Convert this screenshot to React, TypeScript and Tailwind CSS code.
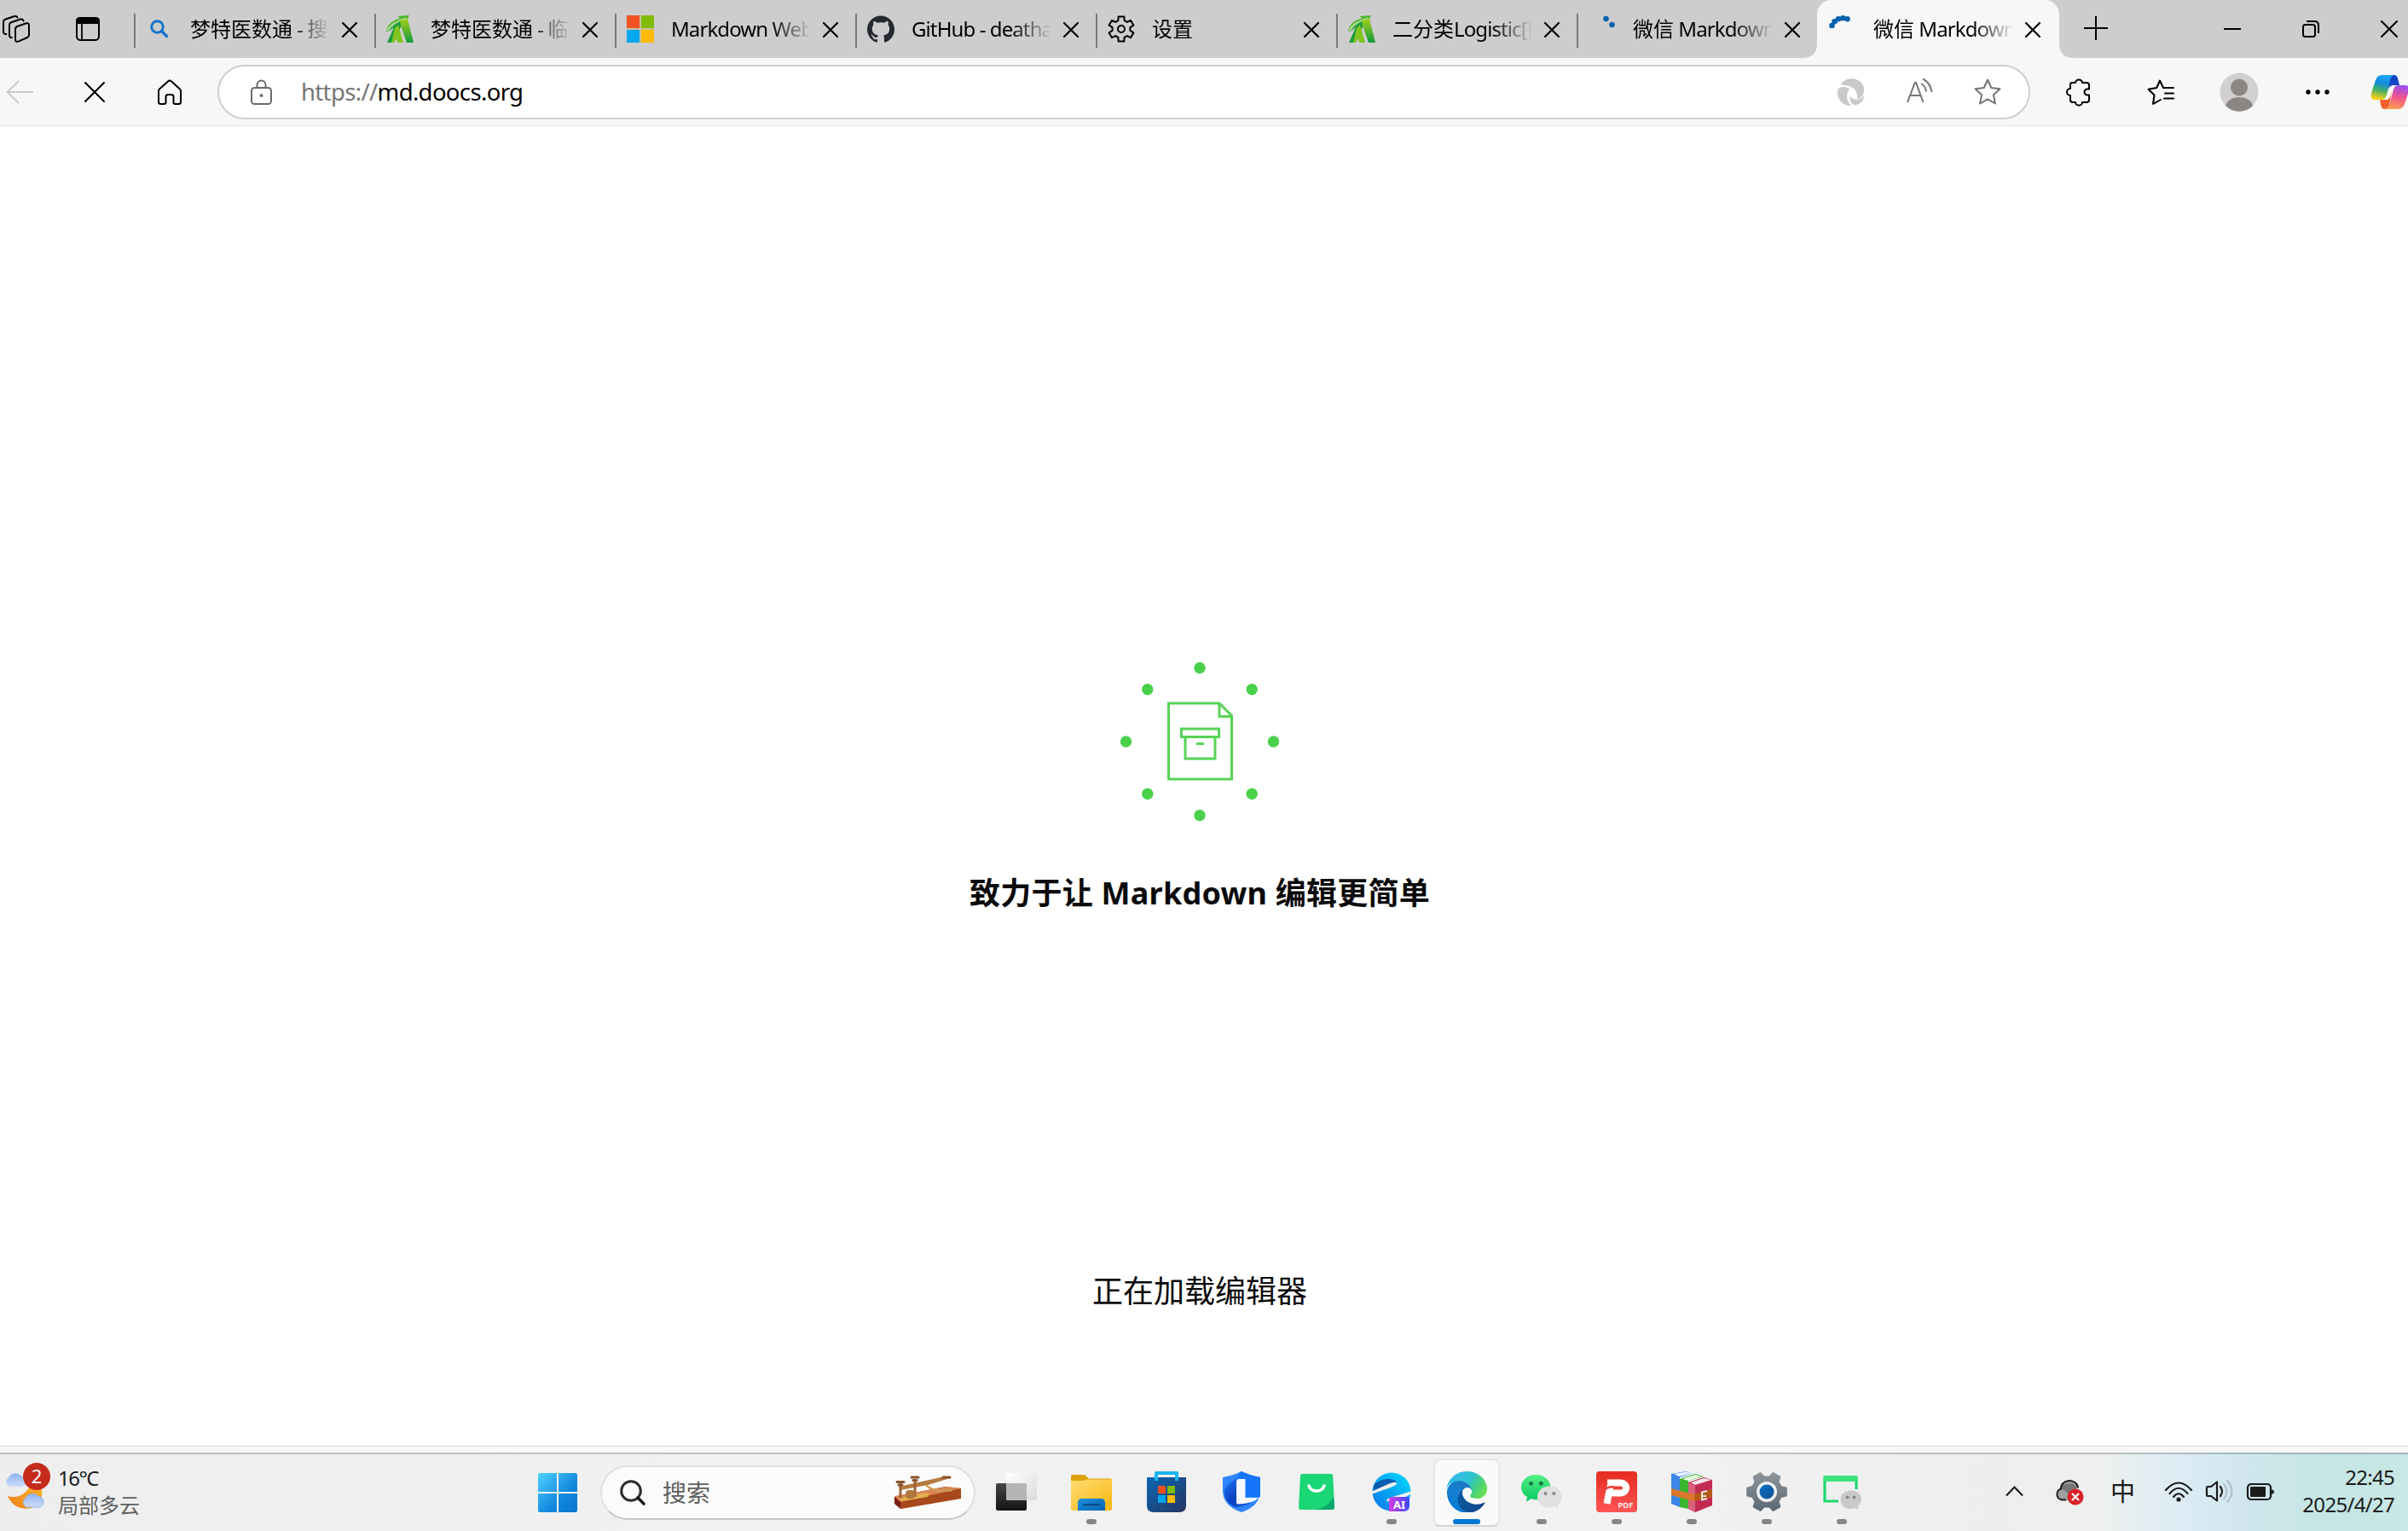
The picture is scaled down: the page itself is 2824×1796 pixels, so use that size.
import React from "react";
import { SiGithub } from "react-icons/si";

type IconProps = { w: number; h: number; className?: string; children: React.ReactNode };

/** Inline drawing whose user units equal CSS pixels. */
function Draw({ w, h, className = "", children }: IconProps) {
  return (
    <svg width={w} height={h} viewBox={`0 0 ${w} ${h}`} fill="none" className={`block shrink-0 overflow-visible ${className}`}>
      {children}
    </svg>
  );
}

function gearPoints(c: number, outer: number, inner: number, teeth: number, offset: number, top: number, base: number) {
  const pts: string[] = [];
  for (let i = 0; i < teeth; i++) {
    const a = offset + (i * 360) / teeth;
    const steps: [number, number][] = [
      [-base, inner],
      [-top, outer],
      [top, outer],
      [base, inner],
    ];
    for (const [d, r] of steps) {
      const t = ((a + d) * Math.PI) / 180;
      pts.push(`${(c + r * Math.cos(t)).toFixed(2)},${(c + r * Math.sin(t)).toFixed(2)}`);
    }
  }
  return pts.join(" ");
}

/* ---------- tab strip ---------- */

const Cross = ({ size, stroke = 2.2 }: { size: number; stroke?: number }) => (
  <Draw w={size} h={size}>
    <path d={`M1 1L${size - 1} ${size - 1}M${size - 1} 1L1 ${size - 1}`} stroke="#000" strokeWidth={stroke} strokeLinecap="round" />
  </Draw>
);

const SearchFav = () => (
  <Draw w={32} h={32}>
    <circle cx="13.5" cy="13.5" r="6.8" stroke="#1373cc" strokeWidth="3" />
    <path d="M18.5 18.5L24.5 24.5" stroke="#1373cc" strokeWidth="3.2" strokeLinecap="round" />
  </Draw>
);

const LeafFav = ({ id }: { id: string }) => (
  <Draw w={32} h={32}>
    <defs>
      <linearGradient id={id} x1="0" y1="0" x2="0" y2="1">
        <stop offset="0" stopColor="#a3cf1c" />
        <stop offset="1" stopColor="#119a3b" />
      </linearGradient>
    </defs>
    <path d="M0 19C1 11 8 5 16 4L14 1L27 0L25 4C15 6 6 11 2 19Z" fill="#4db52c" />
    <path d="M3 19C7 12 13 8 19 6L17 14L7 32H1L9 14Z" fill="#1a9c3a" />
    <path d="M16 6L25 4L32 32H24L17 12Z" fill={`url(#${id})`} />
    <path d="M10 15L14 11L20 32H13L12 27L9 32H6Z" fill="#83c41f" />
    <path d="M1 18C5 10 12 6 24 3" stroke="#cde8b0" strokeWidth="1.2" />
  </Draw>
);

const MicrosoftFav = () => (
  <Draw w={32} h={32}>
    <rect width="15" height="15" fill="#f35325" />
    <rect x="17" width="15" height="15" fill="#81bc06" />
    <rect y="17" width="15" height="15" fill="#05a6f0" />
    <rect x="17" y="17" width="15" height="15" fill="#ffba08" />
    <path d="M16 0V32M0 16H32" stroke="#c9c39a" strokeWidth="2" />
  </Draw>
);

const GearFav = () => (
  <Draw w={32} h={32}>
    <polygon points={gearPoints(16, 15, 10.6, 6, 30 + 60, 13, 20)} stroke="#000" strokeWidth="2" strokeLinejoin="round" />
    <circle cx="16" cy="16" r="4" stroke="#000" strokeWidth="2" />
  </Draw>
);

const Dots = ({ pts }: { pts: [number, number][] }) => (
  <Draw w={32} h={32}>
    {pts.map(([x, y]) => (
      <circle key={x} cx={x} cy={y} r="3.3" fill="#0961ac" />
    ))}
  </Draw>
);

type Tab = { cjk?: string; latin?: string; tail?: string; icon: React.ReactNode; active?: boolean };

const tabs: Tab[] = [
  { cjk: "梦特医数通", latin: " - ", tail: "搜索", icon: <SearchFav /> },
  { cjk: "梦特医数通", latin: " - ", tail: "临床", icon: <LeafFav id="leafA" /> },
  { latin: "Markdown Web", icon: <MicrosoftFav /> },
  { latin: "GitHub - deathau", icon: <SiGithub className="size-8 text-[#24292f]" /> },
  { cjk: "设置", icon: <GearFav /> },
  { cjk: "二分类", latin: "Logistic", tail: "回归", icon: <LeafFav id="leafB" /> },
  { cjk: "微信", latin: " Markdown", icon: <Dots pts={[[20.5, 4], [27.5, 11]]} /> },
  { cjk: "微信", latin: " Markdown", icon: <Dots pts={[[3.5, 12], [6.5, 7.3], [11, 4.3], [16.3, 3.2], [21.5, 4.3]]} />, active: true },
];

function TabStrip() {
  return (
    <header className="flex h-[68px] items-center bg-[#cdcdcd]">
      <div className="flex w-[157px] shrink-0 items-center pl-[3px]">
        <Draw w={32} h={32}>
          <g stroke="#000" strokeWidth="2" strokeLinejoin="round" strokeLinecap="round">
            <path d="M17 13L28 9.3Q31 8.6 31 11.5V23Q31 25 29 26L18.5 30.6Q15 31.8 15 28.5V16Q15 14 17 13Z" />
            <path d="M11 26Q8 26.5 8 23V11Q8 9 10 8.200L21 4.500Q24 4 24.500 6.500" />
            <path d="M4.500 22Q1 22.500 1 19V7.500Q1 5.500 3 4.700L14 1Q17 0.600 17.500 2.500" />
          </g>
        </Draw>
        <Draw w={28} h={28} className="ml-[54px]">
          <rect x="1" y="1" width="26" height="26" rx="4.500" stroke="#000" strokeWidth="2" />
          <path d="M0 8V5Q0 0 5 0H23Q28 0 28 5V8Z" fill="#000" />
          <path d="M7 8V27" stroke="#000" strokeWidth="1.800" />
        </Draw>
      </div>
      {tabs.map((t, i) => (
        <div
          key={i}
          className={
            t.active
              ? "relative flex h-full w-[284px] shrink-0 items-center rounded-t-[17px] bg-[#f7f7f7] pl-[14px]"
              : "flex h-full w-[282px] shrink-0 items-center"
          }
        >
          {t.active ? (
            <>
              <Draw w={17} h={17} className="absolute bottom-0 -left-[17px]">
                <path d="M17 0V17H0Q17 17 17 0Z" fill="#f7f7f7" />
              </Draw>
              <Draw w={17} h={17} className="absolute bottom-0 -right-[17px]">
                <path d="M0 0V17H17Q0 17 0 0Z" fill="#f7f7f7" />
              </Draw>
            </>
          ) : (
            <div className="mt-1 mr-3 h-10 w-[2px] bg-[#7a7a7a]" />
          )}
          {t.icon}
          <div className="ml-5 w-[162px] overflow-hidden text-[24px] leading-[34px] whitespace-pre text-black [mask-image:linear-gradient(to_right,#000_72%,transparent_102%)]">
            {t.cjk}
            <span className="tracking-[-0.9px]">{t.latin}</span>
            {t.latin && t.tail === "回归" ? "[" : ""}
            {t.tail}
          </div>
          <div className="mt-[2px] ml-4">
            <Cross size={18} />
          </div>
        </div>
      ))}
      <Draw w={28} h={28} className="ml-[29px] -mt-[2px]">
        <path d="M14 0V28M0 14H28" stroke="#000" strokeWidth="2" />
      </Draw>
      <div className="ml-[136px] h-[2px] w-5 bg-black" />
      <Draw w={20} h={20} className="ml-[72px]">
        <rect x="1" y="5" width="14" height="14" rx="2.500" stroke="#000" strokeWidth="2" />
        <path d="M5 1H14.500Q19 1 19 5.500V15" stroke="#000" strokeWidth="2" />
      </Draw>
      <div className="ml-[72px]">
        <Cross size={20} stroke={2} />
      </div>
    </header>
  );
}

/* ---------- toolbar ---------- */

const StarPath = "M16 1.500L20.300 11L30.500 12.200L22.900 19.200L25 29.500L16 24.400L7 29.500L9.100 19.200L1.500 12.200L11.700 11Z";

function Toolbar() {
  const cell = "flex w-[88px] shrink-0 items-center justify-center";
  return (
    <div className="flex h-20 items-center overflow-hidden border-b border-[#e5e5e5] bg-[#f7f7f7]">
      <div className="-ml-[21px] flex">
        <div className={cell}>
          <Draw w={32} h={28}>
            <path d="M32 14H1.500M15 1L1.500 14L15 27" stroke="#c9c9c9" strokeWidth="2" />
          </Draw>
        </div>
        <div className={cell}>
          <Cross size={24} stroke={2} />
        </div>
        <div className={cell}>
          <Draw w={28} h={30}>
            <path
              d="M14 1.500Q15 1.500 16 2.500L26 11.500Q27 12.500 27 14V26.500Q27 29 24.500 29H20.500Q18.500 29 18.500 27V20.500Q18.500 18 16 18H12Q9.500 18 9.500 20.500V27Q9.500 29 7.500 29H3.500Q1 29 1 26.500V14Q1 12.500 2 11.500L12 2.500Q13 1.500 14 1.500Z"
              stroke="#000"
              strokeWidth="2"
            />
          </Draw>
        </div>
      </div>

      <div className="ml-3 flex h-16 w-[2126px] shrink-0 items-center rounded-full border-2 border-[#cecece] bg-white pr-2 pl-[37px]">
        <Draw w={25} h={30}>
          <rect x="1" y="10" width="23" height="19" rx="3.500" stroke="#6b6b6b" strokeWidth="2" />
          <path d="M7.500 10V6.500A5 5 0 0 1 17.500 6.500V10" stroke="#6b6b6b" strokeWidth="2" />
          <circle cx="12.500" cy="19" r="2" fill="#6b6b6b" />
        </Draw>
        <div className="ml-[34px] flex-1 text-[27.5px] leading-9 tracking-[-0.65px] text-black">
          <span className="text-[#757575]">https://</span>md.doocs.org
        </div>
        <div className="flex w-20 justify-center">
          <Draw w={32} h={32}>
            <g fill="#c9c9c9">
              <path d="M3.500 7.500C9 -2 25 -3 30.500 9C33 19 27 24 23 24.500C25 17 20 7.500 3.500 7.500Z" />
              <path d="M0.500 13C-2 24 6 32 16 32C11 27 9 20 14 12.500C9 8.500 4 9 0.500 13Z" />
              <path d="M14.500 21C14 26 16 30 20 31.500C27 30 31 26 31.500 20C27 26 20 26.500 14.500 21Z" />
            </g>
          </Draw>
        </div>
        <div className="flex w-20 justify-center">
          <Draw w={30} h={32}>
            <path d="M1 28L9.700 5H11L19.500 28M4 20H16.800" stroke="#757575" strokeWidth="2" />
            <path d="M17 6Q22 9 23 15.500M19 0.500Q28 5 29.500 16" stroke="#757575" strokeWidth="2" />
          </Draw>
        </div>
        <div className="flex w-20 justify-center">
          <Draw w={32} h={32}>
            <path d={StarPath} stroke="#757575" strokeWidth="2" strokeLinejoin="round" />
          </Draw>
        </div>
      </div>

      <Draw w={28} h={32} className="ml-[42px]">
        <path
          d="M7 5H11A4 3.600 0 0 1 19 5H24Q27 5 27 8V12.500H25A3.500 3.500 0 0 0 25 19.500H27V25Q27 28 24 28H19A4 3.600 0 0 1 11 28H8Q5 28 5 25V20A4 4 0 0 1 5 12V7Q5 5 7 5Z"
          stroke="#000"
          strokeWidth="2"
          strokeLinejoin="round"
        />
      </Draw>
      <div className="ml-[34px] h-8 w-[2px] bg-[#cecece]" />
      <Draw w={32} h={30} className="ml-[33px]">
        <path d="M19 10L15 1.500L11.200 10L1.500 11.700L8.500 18.500L7 29L16 24" stroke="#000" strokeWidth="2" strokeLinejoin="round" strokeLinecap="round" />
        <path d="M19 10H31M21 16.500H31M20 22.500H31" stroke="#000" strokeWidth="2" strokeLinecap="round" />
      </Draw>
      <Draw w={46} h={46} className="ml-[53px]">
        <circle cx="23" cy="23" r="22.500" fill="#d2d0ce" />
        <circle cx="23" cy="17.500" r="10" fill="#8a8785" />
        <path d="M7 39C9 32 16 29 23 29C30 29 37 32 39 39A22.500 22.500 0 0 1 7 39Z" fill="#8a8785" />
      </Draw>
      <Draw w={28} h={6} className="ml-[55px]">
        <circle cx="3" cy="3" r="2.700" fill="#000" />
        <circle cx="14" cy="3" r="2.700" fill="#000" />
        <circle cx="25" cy="3" r="2.700" fill="#000" />
      </Draw>
      <Draw w={46} h={40} className="ml-[48px]">
        <defs>
          <linearGradient id="cpL" x1="0.500" y1="0" x2="0.300" y2="1">
            <stop offset="0" stopColor="#1fa4f0" />
            <stop offset="0.300" stopColor="#0f8be0" />
            <stop offset="0.600" stopColor="#3fae6a" />
            <stop offset="0.950" stopColor="#f2cf1a" />
          </linearGradient>
          <linearGradient id="cpR" x1="0.600" y1="0" x2="0.400" y2="1">
            <stop offset="0" stopColor="#9a4ff0" />
            <stop offset="0.500" stopColor="#f2558a" />
            <stop offset="1" stopColor="#ff9d4f" />
          </linearGradient>
        </defs>
        <path d="M22 0H28Q31 0 32 4L34 12H28Q22 12 21 17Z" fill="#1245c9" />
        <path d="M11 29H20L26 14L21 40H17Q13 40 12 35Z" fill="#f4602f" />
        <path d="M13 0H28Q24 1 23 6L19 24Q17 29 12 29H6Q-1 29 1 21L6 6Q8 0 13 0Z" fill="url(#cpL)" />
        <path d="M27 12H40Q47 12 45 19L40 34Q38 40 32 40H16Q21 39 22 35L27 17Q28 12 34 12Z" fill="url(#cpR)" />
        <path d="M28 12Q23 12 22 17L18 29Q22 29 23.500 24L27 13Z" fill="#fff" />
      </Draw>
    </div>
  );
}

/* ---------- page ---------- */

function Page() {
  const g = "#4ad04a";
  return (
    <main className="flex h-[1548px] flex-col items-center bg-white pr-[10px]">
      <Draw w={188} h={188} className="mt-[628px]">
        <g fill={g}>
          <circle cx="94" cy="7.500" r="6.700" />
          <circle cx="94" cy="180.500" r="6.700" />
          <circle cx="7.500" cy="94" r="6.700" />
          <circle cx="180.500" cy="94" r="6.700" />
          <circle cx="32.800" cy="32.800" r="6.700" />
          <circle cx="155.200" cy="32.800" r="6.700" />
          <circle cx="32.800" cy="155.200" r="6.700" />
          <circle cx="155.200" cy="155.200" r="6.700" />
        </g>
        <g stroke={g} strokeWidth="3" opacity="0.920">
          <path d="M57.500 49H117L131.500 63.500V138H57.500ZM117 49V64.500H131.500" />
          <rect x="72.500" y="79" width="44" height="9.500" />
          <path d="M77 88.500V114H112V88.500M90 96.500H99" />
        </g>
      </Draw>
      <h1 className="mt-[56px] text-[36px] leading-[56px] font-bold tracking-[0.25px] whitespace-nowrap text-[#0a0a0a]">
        致力于让 Markdown 编辑更简单
      </h1>
      <p className="mt-[412px] text-[36px] leading-[54px] whitespace-nowrap text-[#0a0a0a]">正在加载编辑器</p>
    </main>
  );
}

/* ---------- taskbar ---------- */

const CloudPath = "M6 18A6 6 0 0 1 5 7.500A9 9 0 0 1 20 5.500A6.500 6.500 0 0 1 22 18Z";

const Weather = () => (
  <Draw w={55} h={56}>
    <defs>
      <linearGradient id="cl" x1="0" y1="0" x2="0" y2="1">
        <stop offset="0" stopColor="#8eb2f4" />
        <stop offset="1" stopColor="#cfdef8" />
      </linearGradient>
      <linearGradient id="mn" x1="0" y1="1" x2="1" y2="0">
        <stop offset="0" stopColor="#ee7f1d" />
        <stop offset="1" stopColor="#fbb829" />
      </linearGradient>
    </defs>
    <path d={CloudPath} fill="url(#cl)" transform="translate(0 10)" />
    <path d="M4 39Q22 44 32 24L42 26Q46 33 43 42L33 53Q12 57 4 39Z" fill="url(#mn)" />
    <path d={CloudPath} fill="url(#cl)" stroke="#8eaef0" strokeWidth="0.800" transform="translate(20 34)" />
    <circle cx="38" cy="16" r="16" fill="#c42b1c" />
    <text x="38" y="24" textAnchor="middle" fontSize="22" fill="#fff">
      2
    </text>
  </Draw>
);

const WindowsLogo = () => (
  <Draw w={46} h={46}>
    <defs>
      <linearGradient id="win" x1="0" y1="0" x2="46" y2="46" gradientUnits="userSpaceOnUse">
        <stop offset="0" stopColor="#4fd3ff" />
        <stop offset="0.600" stopColor="#1389de" />
        <stop offset="1" stopColor="#0874cf" />
      </linearGradient>
    </defs>
    <path d="M2 0H22V22H0V2Q0 0 2 0ZM24 0H44Q46 0 46 2V22H24ZM0 24H22V46H2Q0 46 0 44ZM24 24H46V44Q46 46 44 46H24Z" fill="url(#win)" />
  </Draw>
);

const MorseKey = () => (
  <Draw w={80} h={40}>
    <path d="M1 25L60 13L79 15V27L9 39L1 33Z" fill="#a6481c" />
    <path d="M1 24L62 13L79 15L8 31Z" fill="#d98554" />
    <path d="M1 25L8 31V39L1 33Z" fill="#7a1f12" />
    <path d="M6 28L18 23L42 20L40 25L10 30Z" fill="#e3b04b" />
    <path d="M6 13L24 9L60 1L66 3L40 11L8 17Z" fill="#b5793f" />
    <path d="M8 8V26M25 4V25" stroke="#9b6236" strokeWidth="3" />
    <rect x="14" y="17" width="11" height="10" rx="4" fill="#b07a3f" />
    <path d="M38 11Q46 20 69 17" stroke="#cf9a52" strokeWidth="2.500" />
    <path d="M4 7.500H12M6 11H10M21 2H29M23 5.500H27M58 2H66" stroke="#8a5330" strokeWidth="3" strokeLinecap="round" />
  </Draw>
);

const TaskView = () => (
  <Draw w={48} h={48}>
    <defs>
      <linearGradient id="tvA" x1="0" y1="0" x2="0" y2="1">
        <stop offset="0" stopColor="#454545" />
        <stop offset="1" stopColor="#141414" />
      </linearGradient>
      <linearGradient id="tvB" x1="0" y1="0" x2="1" y2="1">
        <stop offset="0" stopColor="#fff" />
        <stop offset="1" stopColor="#dadada" />
      </linearGradient>
    </defs>
    <rect x="0" y="14" width="36" height="32" rx="2" fill="url(#tvA)" />
    <rect x="12" y="2" width="36" height="32" rx="2" fill="url(#tvB)" />
    <path d="M12 14H34Q36 14 36 16V34H14Q12 34 12 32Z" fill="#b5b5b5" />
  </Draw>
);

const Folder = () => (
  <Draw w={48} h={48}>
    <defs>
      <linearGradient id="fo" x1="0" y1="0" x2="1" y2="1">
        <stop offset="0" stopColor="#ffdd72" />
        <stop offset="1" stopColor="#f9b60f" />
      </linearGradient>
      <linearGradient id="fb" x1="0" y1="0" x2="1" y2="1">
        <stop offset="0" stopColor="#1791df" />
        <stop offset="1" stopColor="#0562ae" />
      </linearGradient>
    </defs>
    <path d="M0 6Q0 4 2 4H14Q17 4 18.500 6L20.500 8.500H46Q48 8.500 48 10V20H0Z" fill="#dda008" />
    <path d="M0 11H13Q16 11 18 9.500H48V44Q48 46 46 46H2Q0 46 0 44Z" fill="url(#fo)" />
    <path d="M8 46V37Q8 32 13 32H35Q40 32 40 37V46Z" fill="url(#fb)" />
    <path d="M14 39H34" stroke="#0a4a87" strokeWidth="2" />
  </Draw>
);

const Store = () => (
  <Draw w={48} h={48}>
    <defs>
      <linearGradient id="st" x1="0" y1="0" x2="1" y2="1">
        <stop offset="0" stopColor="#0b67b5" />
        <stop offset="1" stopColor="#263560" />
      </linearGradient>
    </defs>
    <path d="M1 7H47V40Q47 48 39 48H9Q1 48 1 40Z" fill="url(#st)" />
    <path d="M12 11V2H36V11" stroke="#19b4ee" strokeWidth="4" strokeLinejoin="round" />
    <path d="M14 17H23V26H14Z" fill="#f25022" />
    <path d="M25 17H34V26H25Z" fill="#7fba00" />
    <path d="M14 28H23V37H14Z" fill="#00a4ef" />
    <path d="M25 28H34V37H25Z" fill="#ffb900" />
  </Draw>
);

const Shield = () => (
  <Draw w={48} h={48}>
    <defs>
      <linearGradient id="sh" x1="0" y1="0" x2="1" y2="1">
        <stop offset="0" stopColor="#1b78f5" />
        <stop offset="0.500" stopColor="#0b3fc0" />
        <stop offset="1" stopColor="#1a6ff2" />
      </linearGradient>
    </defs>
    <path d="M24 0Q34 5 46 7V24Q45 41 24 48Q3 41 2 24V7Q14 5 24 0Z" fill="#2f86fa" />
    <path d="M24 0Q34 5 46 7V30H28V9H17Z" fill="#1574fb" />
    <path d="M19 9H18Q3 16 4 26Q5 36 16 42Q34 41 43 31L19 36Z" fill="url(#sh)" />
    <path d="M18 12Q18 9 21 9H28.500V31H44Q38 38 20 38.500Q18 38.500 18 36Z" fill="#f4f8ff" />
  </Draw>
);

const GreenBag = () => (
  <Draw w={48} h={48}>
    <path d="M7 3H41Q43 3 43.200 5L45 42Q45 45 42 45H6Q3 45 3 42L5 5Q5 3 7 3Z" fill="#1bd675" />
    <path d="M44 29L45 42Q45 45 42 45H22Q38 43 44 29Z" fill="#06a96b" />
    <path d="M15 17A9.500 9 0 0 0 33 17" stroke="#fff" strokeWidth="3.600" strokeLinecap="round" />
  </Draw>
);

const AiBrowser = () => (
  <Draw w={48} h={48}>
    <defs>
      <linearGradient id="ab" x1="0" y1="1" x2="1" y2="0">
        <stop offset="0" stopColor="#0a74e8" />
        <stop offset="1" stopColor="#04dcff" />
      </linearGradient>
      <linearGradient id="ai" x1="0" y1="0" x2="1" y2="0">
        <stop offset="0" stopColor="#d83be0" />
        <stop offset="1" stopColor="#3a4dff" />
      </linearGradient>
    </defs>
    <circle cx="24" cy="24" r="22.500" fill="url(#ab)" />
    <path d="M3 16Q12 8 22 9Q30 10 30 14Q20 16 14 20L3 23Z" fill="#075cae" />
    <path d="M0 24L20 15Q30 11 30 14Q30 17 14 22L0 27Z" fill="#f0f0f0" />
    <path d="M48 23L22 31Q14 35 22 35.500Q32 35 48 26Z" fill="#f0f0f0" />
    <path d="M21 34Q21 30 25 30H45V40Q45 47 38 47H21Z" fill="url(#ai)" />
    <text x="33" y="43.500" textAnchor="middle" fontSize="13" fontWeight="700" fill="#fff">
      AI
    </text>
  </Draw>
);

const Edge = () => (
  <svg width="48" height="48" viewBox="0 0 256 256" className="block">
    <defs>
      <linearGradient id="eA" x1="0.250" y1="0" x2="1" y2="0.300">
        <stop offset="0" stopColor="#0c59a4" />
        <stop offset="1" stopColor="#114a8b" />
      </linearGradient>
      <linearGradient id="eB" x1="0.800" y1="0.200" x2="0.200" y2="1">
        <stop offset="0" stopColor="#1b78c6" />
        <stop offset="0.500" stopColor="#1480d2" />
        <stop offset="1" stopColor="#0078d4" />
      </linearGradient>
      <linearGradient id="eC" x1="0" y1="0.300" x2="1" y2="0.700">
        <stop offset="0" stopColor="#35b8f1" />
        <stop offset="0.500" stopColor="#2cc3d0" />
        <stop offset="0.750" stopColor="#46d17c" />
        <stop offset="1" stopColor="#6be24c" />
      </linearGradient>
    </defs>
    <path
      fill="url(#eA)"
      d="M235.700 195.500a93.700 93.700 0 0 1-10.600 4.700 101.900 101.900 0 0 1-35.900 6.400c-47.300 0-88.500-32.500-88.500-74.300a31.500 31.500 0 0 1 16.400-27.300c-42.800 1.800-53.800 46.400-53.800 72.500 0 74 68.100 81.400 82.800 81.400 7.900 0 19.800-2.300 27-4.600l1.300-.4a128.300 128.300 0 0 0 66.600-52.800 4 4 0 0 0-5.300-5.600Z"
    />
    <path
      fill="url(#eB)"
      d="M110.300 246.300A79.200 79.200 0 0 1 87.600 225a80.700 80.700 0 0 1 29.500-120c3.200-1.500 8.500-4.100 15.600-4a32.400 32.400 0 0 1 25.700 13 31.900 31.900 0 0 1 6.300 18.700c0-.2 24.500-79.600-80-79.600-43.900 0-80 41.700-80 78.200a130.200 130.200 0 0 0 12.100 56 128 128 0 0 0 156.400 67 75.500 75.500 0 0 1-62.800-8Z"
    />
    <path
      fill="url(#eC)"
      d="M152.300 149c-.8 1-3.300 2.500-3.300 5.700 0 2.600 1.700 5.100 4.700 7.200 14.400 10 41.500 8.600 41.600 8.600a59.600 59.600 0 0 0 30.300-8.300 61.400 61.400 0 0 0 30.400-52.900c.3-22.400-8-37.300-11.300-43.900C223.500 23.900 177.700 0 128 0A128 128 0 0 0 0 126.200c.5-36.500 36.800-66 80-66 3.500 0 23.500.3 42 10 16.400 8.600 25 18.900 30.900 29.200 6.200 10.700 7.300 24.100 7.300 29.500 0 5.300-2.700 13.300-7.900 20.100Z"
    />
  </svg>
);

const WeChat = () => (
  <Draw w={48} h={48}>
    <defs>
      <linearGradient id="wc" x1="0" y1="0" x2="0" y2="1">
        <stop offset="0" stopColor="#55f082" />
        <stop offset="1" stopColor="#07c862" />
      </linearGradient>
    </defs>
    <path d="M17 4C27 4 34 10 34.500 19L22 33Q16 34 12 32L6 35.500L7 30Q0 26 0 19C0 10 8 4 17 4Z" fill="url(#wc)" />
    <circle cx="11.500" cy="14.300" r="2.500" fill="#187a42" />
    <circle cx="23.300" cy="14.300" r="2.500" fill="#187a42" />
    <path d="M33.500 17.500C42 17.500 48 23 48 30Q48 35 43 39L44 43L39 41Q36 42.500 33 42.500C25 42.500 19 37 19 30C19 23 25 17.500 33.500 17.500Z" fill="#e0e0e0" />
    <circle cx="28.500" cy="26" r="2.100" fill="#8a8a8a" />
    <circle cx="38.300" cy="26" r="2.100" fill="#8a8a8a" />
  </Draw>
);

const PdfApp = () => (
  <Draw w={48} h={48}>
    <defs>
      <linearGradient id="pd" x1="0" y1="0" x2="0" y2="1">
        <stop offset="0" stopColor="#e52b20" />
        <stop offset="1" stopColor="#ff5555" />
      </linearGradient>
    </defs>
    <rect width="48" height="48" rx="4" fill="url(#pd)" />
    <path d="M13 13.500H29A6 5.500 0 0 1 28 25.500H18" stroke="#fff" strokeWidth="8" />
    <path d="M16.500 17L12.500 38" stroke="#fff" strokeWidth="8" />
    <path d="M9 23Q13 17.500 21 18.500" stroke="#ef4038" strokeWidth="2.500" />
    <text x="34.500" y="42.500" textAnchor="middle" fontSize="9.500" fontWeight="600" fill="#fff">
      PDF
    </text>
  </Draw>
);

const WinRar = () => (
  <Draw w={48} h={48}>
    <path d="M0 3L18 0L24 3L10 7V42L0 38Z" fill="#3b86e6" />
    <path d="M3 3L18 0.500L24 3L9 6Z" fill="#e8f1ff" />
    <path d="M10 9L28 3L38 6L20 11V44L10 42Z" fill="#38b52f" />
    <path d="M13 9L28 4L36 6L20 11Z" fill="#eaffe6" />
    <path d="M20 13L38 7L48 10V40L28 48L20 44Z" fill="#c22c52" />
    <path d="M23 13L38 8L47 10L28 16Z" fill="#f7e4e9" />
    <path d="M20 13L28 16V48L20 44Z" fill="#d9607d" />
    <path d="M0 20L27 27L48 21V30L27 35L0 28Z" fill="#d9772b" />
    <path d="M27 27L48 21V30L27 35Z" fill="#b55a17" />
    <path d="M42 23L36 24.500V33.500L42 32M36 29H41" stroke="#e6e6e6" strokeWidth="2" />
  </Draw>
);

const SettingsApp = () => (
  <Draw w={48} h={48}>
    <defs>
      <linearGradient id="se" x1="0" y1="0" x2="0" y2="1">
        <stop offset="0" stopColor="#8c949b" />
        <stop offset="1" stopColor="#5d6a74" />
      </linearGradient>
      <linearGradient id="sc" x1="0" y1="0" x2="1" y2="1">
        <stop offset="0" stopColor="#0a71c8" />
        <stop offset="1" stopColor="#114f94" />
      </linearGradient>
    </defs>
    <polygon points={gearPoints(24, 23, 17.500, 6, 0, 11, 19)} fill="url(#se)" stroke="url(#se)" strokeWidth="2.500" strokeLinejoin="round" />
    <circle cx="24" cy="24" r="12" fill="#eef0f1" />
    <circle cx="24" cy="24" r="8.500" fill="url(#sc)" />
  </Draw>
);

const WeChatTools = () => (
  <Draw w={48} h={48}>
    <path d="M20 35H4V8H41V21" stroke="#1cd971" strokeWidth="3.200" />
    <path d="M2.500 5H42.500V12H2.500Z" fill="#3ce27c" />
    <path d="M34.500 22.500C42 22.500 47 27 47 33Q47 37 43 40.500L43.500 45L39 43Q37 44 34 44C27 44 22.500 39 22.500 33C22.500 27 27 22.500 34.500 22.500Z" fill="#c9c9c9" />
    <circle cx="30.500" cy="30.500" r="1.900" fill="#858585" />
    <circle cx="38.500" cy="30.500" r="1.900" fill="#858585" />
  </Draw>
);

const apps: { icon: React.ReactNode; state?: "open" | "active" }[] = [
  { icon: <TaskView /> },
  { icon: <Folder />, state: "open" },
  { icon: <Store /> },
  { icon: <Shield /> },
  { icon: <GreenBag /> },
  { icon: <AiBrowser />, state: "open" },
  { icon: <Edge />, state: "active" },
  { icon: <WeChat />, state: "open" },
  { icon: <PdfApp />, state: "open" },
  { icon: <WinRar />, state: "open" },
  { icon: <SettingsApp />, state: "open" },
  { icon: <WeChatTools />, state: "open" },
];

function Taskbar() {
  return (
    <footer className="flex h-[92px] border-t-2 border-black/20 bg-[linear-gradient(90deg,#eeeeee_0,#f1f1f1_30%,#f1f1f1_70%,#eeeeee_83%,#edf0ef_87.300%,#dcecf4_90.500%,#cfe6ec_93.500%,#c4e6e4_97%,#c9e7e4_100%)]">
      <div className="flex w-[631px] shrink-0 pl-[5px] pt-[10px]">
        <Weather />
        <div className="ml-2 pt-[2px] text-[24px] leading-8">
          <div className="tracking-[-1.5px] text-[#1b1b1b]">16°C</div>
          <div className="text-[#5f5f5f]">局部多云</div>
        </div>
      </div>
      <div className="pt-[22px]">
        <WindowsLogo />
      </div>
      <div className="mt-[13px] ml-[27px] flex h-[64px] w-[440px] shrink-0 items-center rounded-full border-2 border-[#e0e0e0] border-b-[#c8c8c8] bg-[#fbfbfb] pr-[14px] pl-[21px]">
        <Draw w={30} h={30}>
          <circle cx="13" cy="13" r="11.300" stroke="#2b2b2b" strokeWidth="3" />
          <path d="M21 21L28 28" stroke="#1b1b1b" strokeWidth="3.600" strokeLinecap="round" />
        </Draw>
        <span className="ml-5 flex-1 text-[28px] leading-10 text-[#5f5f5f]">搜索</span>
        <MorseKey />
      </div>
      <div className="ml-1 flex">
        {apps.map((a, i) => (
          <div key={i} className="flex w-[88px] justify-center pt-[5px]">
            <div
              className={
                a.state === "active"
                  ? "flex h-20 w-[78px] flex-col items-center rounded-lg border-2 border-[#e6e6e6] border-b-[#d4d4d4] bg-[#fafafa] pt-[13px]"
                  : "flex h-20 w-[78px] flex-col items-center pt-[15px]"
              }
            >
              {a.icon}
              {a.state && (
                <div className={a.state === "active" ? "mt-2 h-[6px] w-8 rounded-full bg-[#0078d4]" : "mt-2 h-[6px] w-3 rounded-full bg-[#868686]"} />
              )}
            </div>
          </div>
        ))}
      </div>
      <div className="ml-[148px] flex flex-1 items-center pb-[3px]">
        <Draw w={21} h={12} className="mt-[-2px]">
          <path d="M1 11.500L10.500 1.500L20 11.500" stroke="#1b1b1b" strokeWidth="2.200" />
        </Draw>
        <Draw w={32} h={28} className="ml-[38px] mt-[4px]">
          <path d="M8 22A7 7 0 0 1 5 9A10 9 0 0 1 25 8L20 22Z" fill="#a0a0a0" />
          <path d="M6 9A10 9 0 0 1 25 8Q18 8 14 14Q10 9 6 9Z" fill="#757575" />
          <path d="M12 21.500H8A7 6.700 0 0 1 6 8.500A10 9 0 0 1 26 7.500" stroke="#1b1b1b" strokeWidth="2" />
          <circle cx="23" cy="18" r="9.500" fill="#da2128" />
          <path d="M19 14L27 22M27 14L19 22" stroke="#fff" strokeWidth="2.200" />
        </Draw>
        <span className="ml-[32px] text-[29px] leading-10 text-[#1b1b1b]">中</span>
        <Draw w={32} h={24} className="ml-[35px]">
          <g stroke="#1b1b1b" strokeWidth="2.200" strokeLinecap="round">
            <path d="M1 10Q16 -7 31 10" />
            <path d="M5.500 14Q16 1.500 26.500 14" />
            <path d="M10 18Q16 10.500 22 18" />
          </g>
          <circle cx="16" cy="21" r="2.600" fill="#1b1b1b" />
        </Draw>
        <Draw w={32} h={28} className="ml-4">
          <path d="M1 9Q1 8 2 8H6L13 2.500V24.500L6 19H2Q1 19 1 18Z" stroke="#1b1b1b" strokeWidth="2.200" strokeLinejoin="round" />
          <path d="M17 8Q21 13.500 17 19" stroke="#1b1b1b" strokeWidth="2.200" strokeLinecap="round" />
          <path d="M21 4.500Q28 13.500 21 22.500M25 1Q36 13.500 25 26" stroke="#a9bfc6" strokeWidth="2" strokeLinecap="round" />
        </Draw>
        <Draw w={33} h={20} className="ml-4">
          <rect x="1" y="1" width="27" height="18" rx="4" stroke="#1b1b1b" strokeWidth="2.200" />
          <rect x="4" y="4" width="18" height="12" rx="1" fill="#1b1b1b" />
          <path d="M28 7.500H30Q32 7.500 32 10Q32 12.500 30 12.500H28Z" fill="#1b1b1b" />
        </Draw>
      </div>
      <div className="shrink-0 pt-[11px] pr-4 text-right text-[24px] leading-8 tracking-[-0.7px] text-[#1b1b1b]">
        <div>22:45</div>
        <div>2025/4/27</div>
      </div>
    </footer>
  );
}

export default function App() {
  return (
    <div className="h-[1796px] w-[2824px] overflow-hidden bg-white font-['Noto_Sans','Noto_Sans_CJK_SC',sans-serif]">
      <TabStrip />
      <Toolbar />
      <Page />
      <div className="h-2 border-t border-[#d8d8d8] bg-[#f7f7f7]" />
      <Taskbar />
    </div>
  );
}
